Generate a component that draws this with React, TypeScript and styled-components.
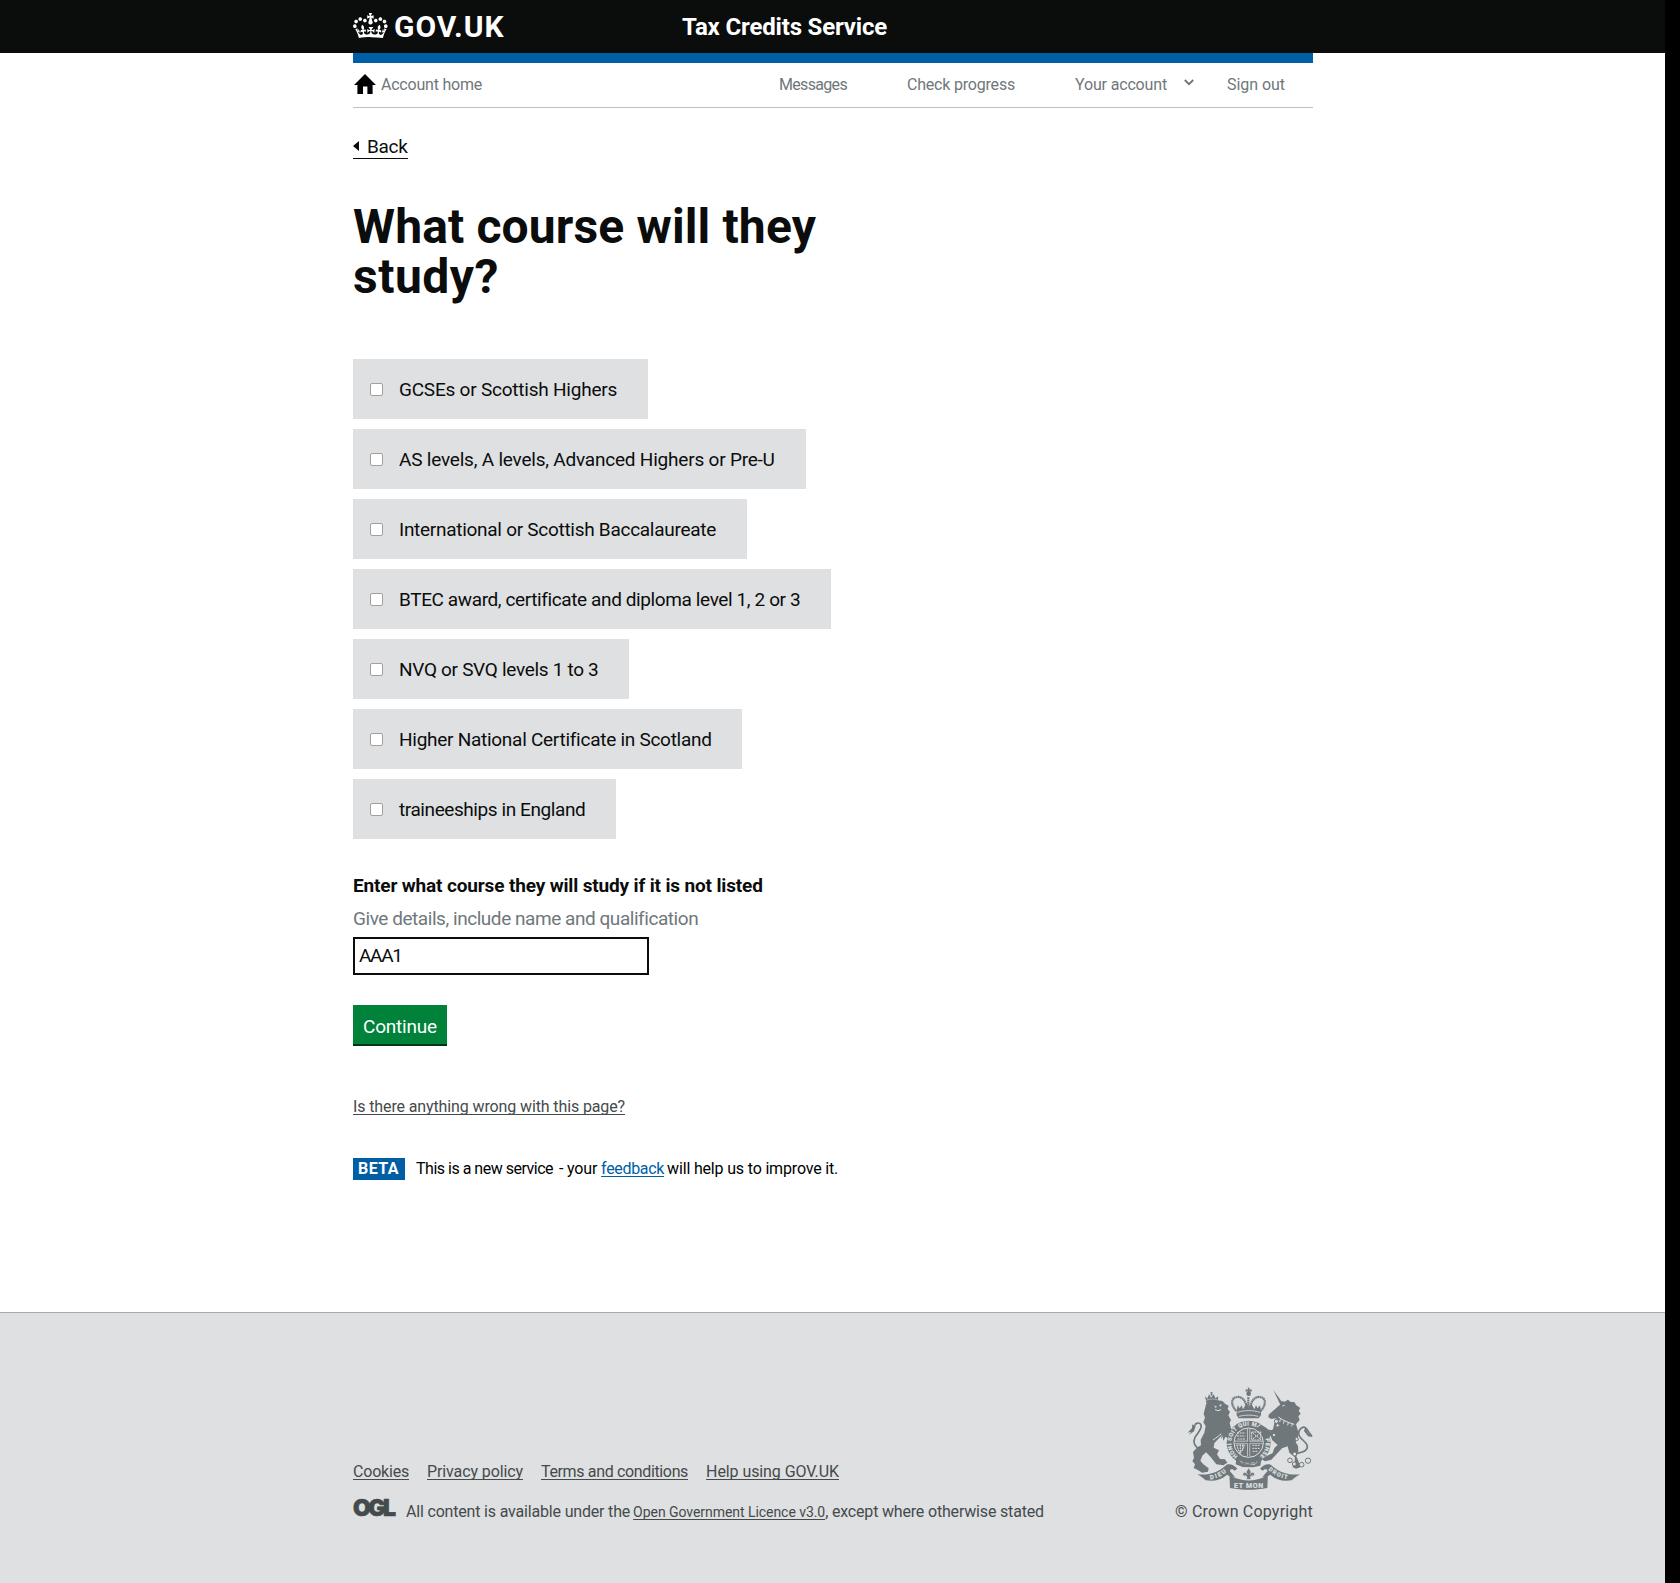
import styled, { createGlobalStyle, css } from "styled-components";

const INK = "#0b0c0c";
const BLUE = "#005ea5";
const GREY = "#6f777b";
const PANEL = "#dee0e2";
const FOOT = "#454a4c";

const GlobalStyle = createGlobalStyle`
  * { box-sizing: border-box; }
  html { background: #000; }
  body { margin: 0; font-family: Roboto, "Liberation Sans", sans-serif; color: ${INK}; }
`;

const Page = styled.div`
  width: 1665px;
  height: 1583px;
  background: #fff;
  display: flex;
  flex-direction: column;
`;

const Wrapper = styled.div`
  width: 960px;
  margin: 0 auto 0 353px;
`;

const Text = styled.span<{ $track?: number }>`
  white-space: pre;
  letter-spacing: ${p => p.$track ?? 0}px;
`;

const link = css`
  text-decoration: underline;
  text-decoration-thickness: 1px;
  text-underline-offset: 2px;
  text-decoration-skip-ink: none;
`;

const HeaderBar = styled.header`
  background: ${INK};
  height: 53px;
  color: #fff;
`;

const HeaderInner = styled(Wrapper)`
  display: flex;
  align-items: center;
  height: 53px;
`;

const HeaderLogo = styled.a`
  display: flex;
  align-items: center;
  width: 329px;
  font-size: 30px;
  font-weight: 700;
  line-height: 32px;
  color: #fff;
`;

const CrownSvg = styled.svg`
  display: block;
  width: 35px;
  height: 31px;
  margin: -4px 6px 0 0;
`;

const ServiceName = styled.span`
  font-size: 24px;
  font-weight: 700;
`;

const Nav = styled.nav`
  display: flex;
  align-items: center;
  height: 55px;
  padding-bottom: 1px;
  border-top: 10px solid ${BLUE};
  border-bottom: 1px solid #bfc1c3;
  font-size: 16px;
  line-height: 43px;
  color: ${GREY};
`;

const HomeIcon = styled.svg`
  width: 22px;
  height: 20px;
  margin: -1px 5px 0 1px;
`;

const NavItem = styled.a<{ $width: number }>`
  width: ${p => p.$width}px;
  display: flex;
  align-items: center;
`;

const Chevron = styled.svg`
  width: 10px;
  height: 7px;
  margin: -4px 0 0 17px;
`;

const Main = styled.main`
  flex: 1;
`;

const Content = styled(Wrapper)`
  display: flex;
  flex-direction: column;
  align-items: flex-start;
  font-size: 19px;
`;

const BackLink = styled.a`
  margin-top: 29px;
  display: flex;
  align-items: center;
  height: 22px;
  line-height: 20px;
  padding-bottom: 1px;
  border-bottom: 1px solid ${INK};
`;

const BackArrow = styled.span`
  border: 5px solid transparent;
  border-right: 6px solid ${INK};
  border-left: 0;
  margin: -2px 8px 0 0;
`;

const Title = styled.h1`
  margin: 43px 0 57px;
  width: 480px;
  font-size: 48px;
  line-height: 50px;
  font-weight: 700;
  display: flex;
  flex-direction: column;
`;

const Options = styled.div`
  display: flex;
  flex-direction: column;
  align-items: flex-start;
  gap: 10px;
`;

const Option = styled.label<{ $width: number }>`
  display: flex;
  align-items: center;
  height: 60px;
  width: ${p => p.$width}px;
  padding: 1px 0 0 17px;
  background: ${PANEL};
`;

const Box = styled.input`
  appearance: none;
  width: 13px;
  height: 13px;
  margin: 0 16px 0 0;
  border: 1px solid #a0a0a0;
  border-radius: 2px;
  background: #fff;
`;

const FieldLabel = styled.label`
  margin-top: 34px;
  line-height: 25px;
  font-weight: 700;
`;

const Hint = styled.span`
  margin-top: 8px;
  line-height: 25px;
  color: ${GREY};
`;

const Field = styled.input`
  margin-top: 6px;
  width: 296px;
  height: 38px;
  padding: 0 4px 2px;
  border: 2px solid ${INK};
  border-radius: 0;
  background: #fff;
  color: ${INK};
  font: 400 19px Roboto, sans-serif;
  letter-spacing: -1.3px;
  outline: none;
`;

const Continue = styled.button`
  margin-top: 30px;
  width: 94px;
  height: 39px;
  border: 0;
  padding: 3px 0 0 10px;
  text-align: left;
  background: #00823b;
  box-shadow: 0 2px 0 #003618;
  color: #fff;
  font: 400 19px Roboto, sans-serif;
`;

const ReportLink = styled.a`
  ${link}
  margin-top: 50px;
  font-size: 16px;
  line-height: 25px;
  color: ${FOOT};
`;

const Phase = styled.div`
  display: flex;
  align-items: center;
  margin-top: 39px;
  height: 22px;
  font-size: 16px;
  line-height: 22px;
  color: #000;
`;

const PhaseTag = styled.strong`
  width: 52px;
  margin-right: 11px;
  padding-left: 5px;
  background: ${BLUE};
  color: #fff;
`;

const FeedbackLink = styled.a`
  ${link}
  color: ${BLUE};
  margin: 0 3px 0 4px;
`;

const PhaseDash = styled.span`
  margin-left: 6px;
`;

const Footer = styled.footer`
  height: 271px;
  border-top: 1px solid #a1acb2;
  background: ${PANEL};
  font-size: 16px;
  line-height: 20px;
  color: ${FOOT};
`;

const FooterInner = styled(Wrapper)`
  display: flex;
  justify-content: space-between;
  align-items: flex-end;
  height: 209px;
`;

const FooterLinks = styled.div`
  display: flex;
  gap: 18px;
  margin-bottom: 17px;
`;

const FooterLink = styled.a`
  ${link}
`;

const Licence = styled.div`
  display: flex;
  align-items: baseline;
  height: 23px;
`;

const LicenceLink = styled.a`
  ${link}
  font-size: 14px;
  margin-left: 3px;
`;

const OglLogo = styled.svg`
  width: 44px;
  height: 18px;
  margin-right: 9px;
  overflow: visible;
`;

const Copyright = styled.div`
  display: flex;
  flex-direction: column;
  align-items: flex-end;
  gap: 12px;
`;

const ArmsSvg = styled.svg`
  display: block;
  width: 126px;
  height: 103px;
`;

const options: [string, number, number][] = [
  ["GCSEs or Scottish Highers", 295, -0.22],
  ["AS levels, A levels, Advanced Highers or Pre-U", 453, -0.21],
  ["International or Scottish Baccalaureate", 394, -0.28],
  ["BTEC award, certificate and diploma level 1, 2 or 3", 478, -0.39],
  ["NVQ or SVQ levels 1 to 3", 276, -0.31],
  ["Higher National Certificate in Scotland", 389, -0.27],
  ["traineeships in England", 263, -0.42],
];

const footerLinks: [string, number][] = [
  ["Cookies", -0.2],
  ["Privacy policy", -0.11],
  ["Terms and conditions", -0.35],
  ["Help using GOV.UK", -0.08],
];

function Crown() {
  return (
    <CrownSvg viewBox="0 0 36 32" fill="#fff" aria-hidden="true">
      <path
        fillRule="evenodd"
        d="M6.7 12.2c1 .4 2.1-.1 2.5-1s-.1-2.1-1-2.5c-1-.4-2.1.1-2.5 1-.4 1 0 2.1 1 2.5m-4.3 2.5c1 .4 2.1-.1 2.5-1s-.1-2.1-1-2.5c-1-.4-2.1.1-2.5 1-.5 1 0 2.1 1 2.5m-1.3 4.8c1 .4 2.1-.1 2.5-1s-.1-2.1-1-2.5c-1-.4-2.1.1-2.5 1-.4 1 0 2.1 1 2.5m10.4-5.8c1 .4 2.1-.1 2.5-1s-.1-2.1-1-2.5c-1-.4-2.1.1-2.5 1s0 2.1 1 2.5m17.4-1.5c-1 .4-2.1-.1-2.5-1s.1-2.1 1-2.5c1-.4 2.1.1 2.5 1 .5 1 0 2.1-1 2.5m4.3 2.5c-1 .4-2.1-.1-2.5-1s.1-2.1 1-2.5c1-.4 2.1.1 2.5 1 .5 1 0 2.1-1 2.5m1.3 4.8c-1 .4-2.1-.1-2.5-1s.1-2.1 1-2.5c1-.4 2.1.1 2.5 1 .4 1 0 2.1-1 2.5m-10.4-5.8c-1 .4-2.1-.1-2.5-1s.1-2.1 1-2.5c1-.4 2.1.1 2.5 1s0 2.1-1 2.5m-5.3-4.9l2.4 1.3V6.5l-2.4.8c-.1-.1-.1-.2-.2-.3s1-3 1-3h-3.4l1 3c-.1.1-.2.2-.2.3-.1.1-2.4-.8-2.4-.8v3.6L17 8.8c.1.1.2.2.3.3l-1.4 4.2c-.1.2-.1.4-.1.6 0 1.1.8 2 1.9 2.2h.7c1-.2 1.9-1.1 1.9-2.1 0-.2 0-.4-.1-.6l-1.3-4.3c-.1-.2 0-.2.1-.3m-1 20.3c4.6 0 8.9.3 12.8.9 1.1-4.6 2.4-7.2 3.8-9.1l-2.6-.9c.3 1.3.3 1.9 0 2.8-.4-.4-.8-1.2-1.1-2.4l-1.2 4.2c.8-.5 1.4-.9 2-.9-1.2 2.6-2.7 3.2-3.6 3-1.2-.2-1.7-1.3-1.5-2.2.3-1.3 1.6-1.6 2.2-.1 1.2-2.4-.8-3.1-2.1-2.4 1.9-1.9 2.2-3.6.6-5.7-2.2 1.7-2.2 3.3-1.2 5.6-1.3-1.5-3.3-.7-2.5 1.7.9-1.4 2.1-.5 1.9.8-.2 1.2-1.7 2.1-3.7 1.9-2.8-.2-2.9-2.1-2.9-3.5.7-.1 1.9.5 3 2l.4-4.4c-1.1 1.2-2.2 1.4-3.3 1.4.4-1.2 2.1-3.1 2.1-3.1h-5.4s1.8 2 2.1 3.1c-1.1 0-2.2-.3-3.3-1.4l.4 4.4c1.1-1.5 2.3-2.1 3-2-.1 1.5-.2 3.3-2.9 3.5-1.9.2-3.5-.7-3.7-1.9-.2-1.3 1-2.2 1.9-.8.7-2.3-1.2-3.1-2.5-1.7 1-2.2 1-3.9-1.2-5.6-1.6 2-1.3 3.8.6 5.7-1.2-.7-3.3 0-2.1 2.4.6-1.5 1.9-1.1 2.2.1.2.9-.4 2-1.5 2.2-1 .2-2.5-.5-3.6-3.1.6 0 1.2.4 2 .9l-1.2-4.2c-.3 1.1-.7 1.9-1.1 2.4-.3-.9-.3-1.5 0-2.8l-2.6.9c1.4 1.9 2.7 4.5 3.8 9.1 3.8-.6 8.2-.9 12.7-.9"
      />
    </CrownSvg>
  );
}

function RoyalArms() {
  return (
    <ArmsSvg viewBox="82 52 378 309" fill={GREY} aria-hidden="true">
      {/* lion */}
      <path d="M136 79l7 8 5-13 6 10 8-10 5 12 9-6-3 20h-33z" />
      <path d="M139 92c12-5 22-5 33-2" stroke={PANEL} strokeWidth="1.5" fill="none" />
      <path d="M153 67h5v11h-5z" />
      <path d="M140 101l14-3 20-6 14 2 9 9 10 5-3 10 7 9-5 10 8 14-4 9 5 20 8 18-11 12-15-9-5 12-10-12-18 20-2 13 16 8-6 12 9 14 15 1 7 10-12 8-21-3-17-22-14-14-11 10-6 15 9 11 16 12-2 10-18 3-14-9-11-5 4-11-8-10 5-9-3-18 13-14 11-6-1-17 11-21 4-20-7-11 5-14-4-12z" />
      <path d="M163 107l9 4-4 4zM178 106l9-2-4 7z" fill={PANEL} />
      <path d="M166 120l9 3 9-3M160 211c11-8 20-14 25-19M186 198l6 22 13 13" fill="none" stroke={PANEL} strokeWidth="3" />
      <path d="M121 239c-17-8-22-23-15-36 7-13 25-28 17-39-5-7-16-4-18 4" fill="none" stroke={GREY} strokeWidth="5" />
      <path d="M108 170l-5 15-16 11 8-10-11 3 13-14 1-11z" />
      {/* crown */}
      <circle cx="267" cy="72" r="7" />
      <path d="M264 54h6l-1 6 7-1v7l-7-1 1 13h-6l1-13-7 1v-7l7 1z" />
      <path d="M266 83v42M230 124c-17-18-17-40 2-42 15-2 29 10 30 43M303 124c17-18 17-40-2-42-15-2-29 10-30 43" fill="none" stroke={GREY} strokeWidth="6.5" strokeDasharray="5 1.2" />
      <path d="M231 124l3-17 6 9 6-9 4 12 10-17 7 12 8-12 9 17 5-12 5 9 7-9 3 17v13l-7 9h-60l-6-9z" />
      <path d="M233 128c22-7 46-7 68 0M238 140c19-5 39-5 58 0" fill="none" stroke={PANEL} strokeWidth="2.5" />
      {/* garter and shield */}
      <circle cx="267" cy="219" r="66" />
      <circle cx="267" cy="219" r="44" fill="none" stroke={PANEL} strokeWidth="3" />
      <path d="M232 190h25M232 199h25M234 208h23M279 190l23 18M302 190l-23 18M276 187h27v24h-27zM231 226h25l-15 27zM242 225v24M249 226v18M278 227h24M278 236h22M279 245h15" fill="none" stroke={PANEL} strokeWidth="3" strokeDasharray="6 2" />
      <path d="M267 177v82M225 218h84" stroke={PANEL} strokeWidth="9" />
      <path d="M267 177v82M225 218h84" stroke={GREY} strokeWidth="5" />
      <path id="garter" d="M236 261A52 52 0 1 1 298 261" fill="none" />
      <text fill={PANEL} stroke={PANEL} strokeWidth="0.6" fontSize="17" fontWeight="700" fontFamily="Roboto, sans-serif">
        <textPath href="#garter" startOffset="2" textLength="255">HONI SOIT QUI MAL Y PENSE</textPath>
      </text>
      <path d="M230 270l20 13 33 3 22-14-3 16-22 5-31-1-21-8z" />
      <path d="M240 274c17 9 34 9 53 2" fill="none" stroke={PANEL} strokeWidth="2" strokeDasharray="12 5" />
      {/* unicorn */}
      <path d="M341 61l28 39-7 5z" />
      <path d="M361 105l7-11 7 2 10-6 7 6 13 2 4 8 13 9-5 8 6 9-7 8 4 11-11 13 7 23-1 17-7 14 7 10 1 17-6 15 6 14 6 19-13 4-11-5 8-9-1-21-16-13-5-19-17 6-18 19-14 15-19 5-9-6 13-9 19-10 5-15 10-9-16-14-6-16-13 7-14-3 5-11-9-7-8 3-3-10 14-9 17 9 8 11 11-7 4-18 5-15-14 2-9-5 1-8z" />
      <path d="M368 109l7-2M356 142l14 9 18 8 16 5M362 149l-2 8M374 153l-3 9M386 158l-2 9M398 162l-2 8" fill="none" stroke={PANEL} strokeWidth="3" />
      <path d="M343 186l-21-4-8 11 12 5 13-3 9 12" fill="none" stroke={GREY} strokeWidth="6" />
      <path d="M412 251c24-3 36-13 29-27-6-12-26-19-24-35 2-15 16-21 23-12 6 7 9 16 17 22" fill="none" stroke={GREY} strokeWidth="5" />
      <path d="M437 173l8 17 14 12-14-2-12-16z" />
      <g fill={PANEL} stroke={GREY} strokeWidth="3">
        <circle cx="350" cy="155" r="6" /><circle cx="354" cy="167" r="5" /><circle cx="343" cy="196" r="5" />
        <circle cx="411" cy="208" r="5" /><circle cx="405" cy="253" r="6" /><circle cx="391" cy="272" r="7" />
        <circle cx="404" cy="283" r="6" /><circle cx="426" cy="285" r="7" /><circle cx="445" cy="273" r="8" />
      </g>
      {/* motto ribbon */}
      <path d="M113 314C150 318 180 305 201 285C212 280 225 288 233 297L225 303C217 297 210 298 211 305L226 322C214 321 206 318 202 315C185 330 165 336 138 332L126 322Z" />
      <path d="M421 314C384 318 354 305 333 285C322 280 309 288 301 297L309 303C317 297 324 298 323 305L308 322C320 321 328 318 332 315C349 330 369 336 396 332L408 322Z" />
      <path d="M209 307l11 15c30 14 65 14 94 0l11-15-2 48c-38 7-74 7-112 0z" />
      <path id="dieu" d="M152 329c20-2 39-12 54-27" fill="none" />
      <path id="droit" d="M326 300c17 16 38 27 63 29" fill="none" />
      <g fill={PANEL} stroke={PANEL} strokeWidth="0.5" fontFamily="Roboto, sans-serif" fontWeight="700">
        <text fontSize="18"><textPath href="#dieu" textLength="54">DIEU</textPath></text>
        <text fontSize="17"><textPath href="#droit" textLength="64">DROIT</textPath></text>
        <text x="223" y="354" fontSize="21" textLength="88">ET MON</text>
      </g>
      <path d="M267 295l7 12-3 8c3-8 14-9 13 1l-6 5 1-5-7 5 1 8h-12l1-8-7-5 1 5-6-5c-1-10 10-9 13-1l-3-8z" stroke={PANEL} strokeWidth="1" />
    </ArmsSvg>
  );
}

export default function App() {
  return (
    <>
      <GlobalStyle />
      <Page>
        <HeaderBar>
          <HeaderInner>
            <HeaderLogo>
              <Crown />
              <Text $track={0.95}>GOV.UK</Text>
            </HeaderLogo>
            <ServiceName><Text $track={-0.17}>Tax Credits Service</Text></ServiceName>
          </HeaderInner>
        </HeaderBar>
        <Wrapper>
          <Nav>
            <NavItem $width={426}>
              <HomeIcon viewBox="0 0 22 20" fill="#000">
                <path d="M11 0L22 11H18.6V20H13.4V12.5H9V20H3.4V11H0Z" />
              </HomeIcon>
              <Text $track={-0.22}>Account home</Text>
            </NavItem>
            <NavItem $width={128}><Text $track={-0.68}>Messages</Text></NavItem>
            <NavItem $width={168}><Text $track={-0.2}>Check progress</Text></NavItem>
            <NavItem $width={152}>
              <Text $track={-0.16}>Your account</Text>
              <Chevron viewBox="0 0 10 7" fill="none" stroke={GREY} strokeWidth="1.8">
                <path d="M.8 1L5 5.2 9.2 1" />
              </Chevron>
            </NavItem>
            <NavItem $width={60}><Text $track={-0.05}>Sign out</Text></NavItem>
          </Nav>
        </Wrapper>
        <Main>
          <Content>
            <BackLink><BackArrow /><Text $track={-0.31}>Back</Text></BackLink>
            <Title>
              <Text $track={0.14}>What course will they</Text>
              <Text $track={0.5}>study?</Text>
            </Title>
            <Options>
              {options.map(([label, width, track]) => (
                <Option key={label} $width={width}>
                  <Box type="checkbox" />
                  <Text $track={track}>{label}</Text>
                </Option>
              ))}
            </Options>
            <FieldLabel><Text $track={-0.15}>Enter what course they will study if it is not listed</Text></FieldLabel>
            <Hint><Text $track={-0.45}>Give details, include name and qualification</Text></Hint>
            <Field defaultValue="AAA1" />
            <Continue><Text $track={-0.2}>Continue</Text></Continue>
            <ReportLink><Text $track={-0.12}>Is there anything wrong with this page?</Text></ReportLink>
            <Phase>
              <PhaseTag><Text $track={0.45}>BETA</Text></PhaseTag>
              <Text $track={-0.49}>This is a new service</Text>
              <PhaseDash><Text $track={-0.2}>- your</Text></PhaseDash>
              <FeedbackLink><Text $track={-0.32}>feedback</Text></FeedbackLink>
              <Text $track={-0.17}>will help us to improve it.</Text>
            </Phase>
          </Content>
        </Main>
        <Footer>
          <FooterInner>
            <div>
              <FooterLinks>
                {footerLinks.map(([label, track]) => (
                  <FooterLink key={label}><Text $track={track}>{label}</Text></FooterLink>
                ))}
              </FooterLinks>
              <Licence>
                <OglLogo viewBox="0 0 44 18">
                  <text x="0" y="17" fill={FOOT} stroke={FOOT} strokeWidth="0.6" fontFamily="Inter, sans-serif" fontWeight="900" fontSize="23" textLength="43">OGL</text>
                </OglLogo>
                <Text $track={-0.18}>All content is available under the</Text>
                <LicenceLink><Text $track={-0.05}>Open Government Licence v3.0</Text></LicenceLink>
                <Text $track={-0.18}>, except where otherwise stated</Text>
              </Licence>
            </div>
            <Copyright>
              <RoyalArms />
              <Text $track={0.2}>© Crown Copyright</Text>
            </Copyright>
          </FooterInner>
        </Footer>
      </Page>
    </>
  );
}
